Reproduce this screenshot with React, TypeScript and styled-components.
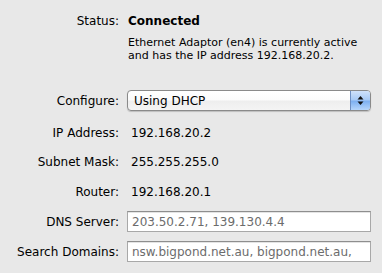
import React from "react";
import styled, { createGlobalStyle } from "styled-components";

const GlobalStyle = createGlobalStyle`
  html, body {
    margin: 0;
    padding: 0;
    background: #e8e8e8;
  }
  body {
    font-family: "DejaVu Sans", "Liberation Sans", sans-serif;
    color: #000000;
  }
`;

const Panel = styled.div`
  width: 382px;
  height: 273px;
  box-sizing: border-box;
  padding: 12px 11px 0 0;
  display: flex;
  flex-direction: column;
`;

const Row = styled.div<{ $height?: number; $mt?: number }>`
  display: grid;
  grid-template-columns: 119px 1fr;
  column-gap: 8px;
  align-items: center;
  height: ${(p) => p.$height ?? 21}px;
  margin-top: ${(p) => p.$mt ?? 0}px;
`;

const Label = styled.div`
  text-align: right;
  font-size: 12px;
  white-space: nowrap;
`;

const Value = styled.div<{ $bold?: boolean }>`
  font-size: 12px;
  font-weight: ${(p) => (p.$bold ? 700 : 400)};
  padding-left: ${(p) => (p.$bold ? 1 : 4)}px;
  white-space: nowrap;
`;

const Note = styled.div`
  grid-column: 2;
  font-size: 11px;
  line-height: 13px;
  padding-left: 1px;
`;

const Popup = styled.div`
  position: relative;
  height: 21px;
  box-sizing: border-box;
  border: 1px solid #8a8a8a;
  border-radius: 4px;
  background: linear-gradient(#ffffff 0%, #fbfbfb 45%, #eeeeee 55%, #f4f4f4 100%);
  box-shadow: 0 1px 1px rgba(0, 0, 0, 0.18);
  display: flex;
  align-items: center;
  overflow: hidden;
`;

const PopupText = styled.span`
  flex: 1;
  font-size: 12px;
  padding-left: 6px;
`;

const Stepper = styled.div`
  width: 19px;
  height: 100%;
  border-left: 1px solid #6e8fc2;
  background: linear-gradient(#cfe1f9 0%, #a9cbf5 45%, #7fb1f1 55%, #b6d6fb 100%);
  display: flex;
  align-items: center;
  justify-content: center;
`;

const Field = styled.div`
  height: 21px;
  box-sizing: border-box;
  border: 1px solid #a8a8a8;
  border-top-color: #8e8e8e;
  background: #ffffff;
  box-shadow: inset 0 1px 0 #e4e4e4;
  display: flex;
  align-items: center;
  padding-left: 4px;
  font-size: 12px;
  color: #6c6c6c;
  overflow: hidden;
  white-space: nowrap;
`;

const Arrows = () => (
  <svg width="7" height="11" viewBox="0 0 7 11">
    <path d="M3.5 1 L6.5 4.5 L0.5 4.5 Z" fill="#111" />
    <path d="M3.5 10 L6.5 6.5 L0.5 6.5 Z" fill="#111" />
  </svg>
);

export default function App() {
  return (
    <>
      <GlobalStyle />
      <Panel>
        <Row $height={18}>
          <Label>Status:</Label>
          <Value $bold>Connected</Value>
        </Row>
        <Row $height={26} $mt={6}>
          <Note>
            Ethernet Adaptor (en4) is currently active
            <br />
            and has the IP address 192.168.20.2.
          </Note>
        </Row>
        <Row $mt={28}>
          <Label>Configure:</Label>
          <Popup>
            <PopupText>Using DHCP</PopupText>
            <Stepper>
              <Arrows />
            </Stepper>
          </Popup>
        </Row>
        <Row $mt={11}>
          <Label>IP Address:</Label>
          <Value>192.168.20.2</Value>
        </Row>
        <Row $mt={8}>
          <Label>Subnet Mask:</Label>
          <Value>255.255.255.0</Value>
        </Row>
        <Row $mt={9}>
          <Label>Router:</Label>
          <Value>192.168.20.1</Value>
        </Row>
        <Row $mt={9}>
          <Label>DNS Server:</Label>
          <Field>203.50.2.71, 139.130.4.4</Field>
        </Row>
        <Row $mt={9}>
          <Label>Search Domains:</Label>
          <Field>nsw.bigpond.net.au, bigpond.net.au,</Field>
        </Row>
      </Panel>
    </>
  );
}
